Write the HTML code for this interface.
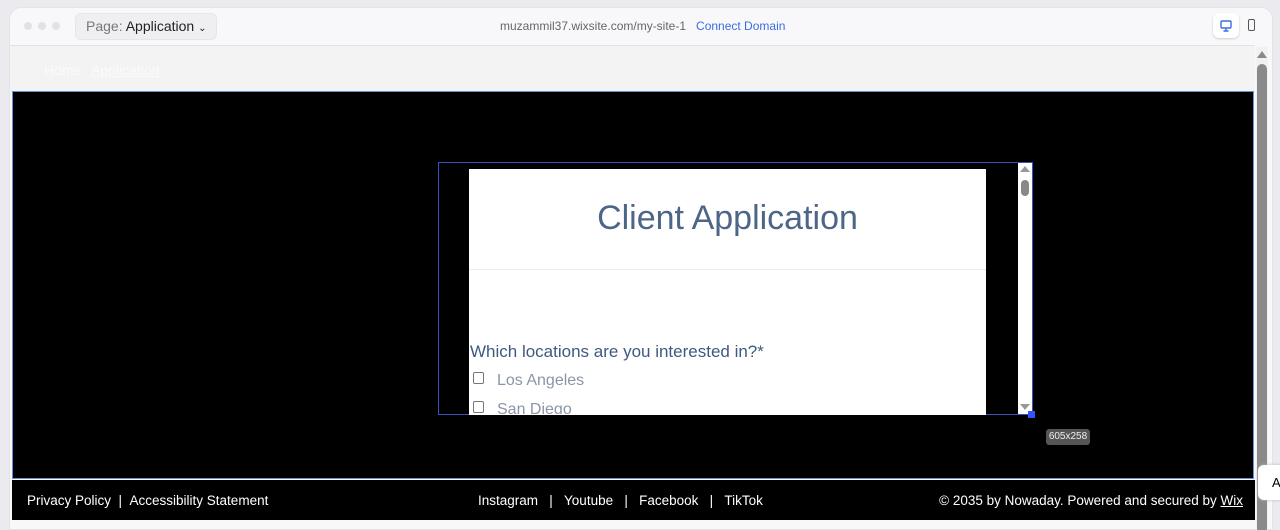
<!DOCTYPE html>
<html><head><style>
*{margin:0;padding:0;box-sizing:border-box}
html,body{width:1280px;height:530px;overflow:hidden}
body{background:#ebebef;font-family:"Liberation Sans",sans-serif;position:relative}
.a{position:absolute}
</style></head><body>
<div class="a" style="left:9px;top:7px;width:1264px;height:523px;background:#f8f8fa;border-radius:12px 12px 0 0;border:1px solid #e4e4e8"></div>
<div class="a" style="left:24px;top:22px;width:8px;height:8px;border-radius:50%;background:#e2e2e4"></div>
<div class="a" style="left:38px;top:22px;width:8px;height:8px;border-radius:50%;background:#e2e2e4"></div>
<div class="a" style="left:52px;top:22px;width:8px;height:8px;border-radius:50%;background:#e2e2e4"></div>
<div class="a" style="left:75px;top:13px;width:142px;height:27px;background:#efeff1;border-radius:6px;border:1px solid #e6e6e8"></div>
<div class="a" style="left:86px;top:18px;font-size:14px;color:#777">Page: <span style="color:#222">Application</span> <span style="color:#222;font-size:10px">⌄</span></div>
<div class="a" style="left:500px;top:19px;font-size:12px;color:#666">muzammil37.wixsite.com/my-site-1 &nbsp;&nbsp;<span style="color:#3b6de0">Connect Domain</span></div>
<div class="a" style="left:1213px;top:13px;width:26px;height:25px;background:#fff;border-radius:6px;box-shadow:0 1px 2px #ccc"></div>
<svg class="a" style="left:1219px;top:19px" width="14" height="14" viewBox="0 0 14 14"><rect x="2" y="2" width="10" height="7" rx="1" fill="none" stroke="#3b6de0" stroke-width="1.4"/><path d="M7 9v3M4.5 12h5" stroke="#3b6de0" stroke-width="1.4"/></svg>
<div class="a" style="left:1248px;top:19px;width:7px;height:12px;border:1.3px solid #555;border-radius:2px"></div>
<div class="a" style="left:10px;top:45px;width:1245px;height:47px;background:#f3f3f4;border-top:1px solid #e2e2e4"></div>
<div class="a" style="left:44px;top:62px;font-size:14px;color:#fafafa">Home</div>
<div class="a" style="left:91px;top:62px;font-size:14px;color:#fafafa;text-decoration:underline">Application</div>
<div class="a" style="left:12px;top:91px;width:1242px;height:388px;background:#000;border:1px solid #6a90d8"></div>
<div class="a" style="left:438px;top:162px;width:595px;height:253px;border:1px solid #3a4fc0"></div>
<div class="a" style="left:469px;top:169px;width:517px;height:246px;background:#fff"></div>
<div class="a" style="left:469px;top:269px;width:517px;height:1px;background:#ececec"></div>
<div class="a" style="left:469px;top:199px;width:517px;text-align:center;font-size:34px;color:#4d6688">Client Application</div>
<div class="a" style="left:470px;top:342px;font-size:17px;color:#3e5a80">Which locations are you interested in?*</div>
<div class="a" style="left:473px;top:372px;width:11px;height:12px;border:1px solid #777;border-radius:2px"></div>
<div class="a" style="left:497px;top:372px;font-size:16px;color:#8a96a6">Los Angeles</div>
<div class="a" style="left:473px;top:401px;width:11px;height:12px;border:1px solid #777;border-radius:2px"></div>
<div class="a" style="left:497px;top:401px;height:13px;overflow:hidden;font-size:16px;color:#8a96a6">San Diego</div>
<div class="a" style="left:1018px;top:163px;width:14px;height:251px;background:#fff"></div>
<div class="a" style="left:1021px;top:180px;width:8px;height:16px;background:#888;border-radius:4px"></div>
<div class="a" style="left:1020px;top:166px;width:0;height:0;border:5px solid transparent;border-bottom:6px solid #999;border-top:0"></div>
<div class="a" style="left:1020px;top:404px;width:0;height:0;border:5px solid transparent;border-top:6px solid #999;border-bottom:0"></div>
<div class="a" style="left:1028px;top:411px;width:7px;height:7px;background:#3355ff"></div>
<div class="a" style="left:1046px;top:429px;width:44px;height:16px;background:#555;border-radius:3px;color:#eee;font-size:10px;text-align:center;line-height:16px">605x258</div>
<div class="a" style="left:12px;top:480px;width:1243px;height:40px;background:#000"></div>
<div class="a" style="left:27px;top:493px;font-size:13.5px;color:#fff">Privacy Policy &nbsp;| &nbsp;Accessibility Statement</div>
<div class="a" style="left:478px;top:493px;font-size:13.5px;color:#fff">Instagram &nbsp;&nbsp;| &nbsp;&nbsp;Youtube &nbsp;&nbsp;| &nbsp;&nbsp;Facebook &nbsp;&nbsp;| &nbsp;&nbsp;TikTok</div>
<div class="a" style="right:37px;top:493px;font-size:13.5px;color:#fff">© 2035 by Nowaday. Powered and secured by <u>Wix</u></div>
<div class="a" style="left:1256px;top:47px;width:12px;height:483px;background:#f1f1f1"></div>
<div class="a" style="left:1257px;top:51px;width:0;height:0;border:5px solid transparent;border-bottom:7px solid #888;border-top:0"></div>
<div class="a" style="left:1257px;top:64px;width:10px;height:470px;background:#8a8a8a;border-radius:5px"></div>
<div class="a" style="left:1258px;top:465px;width:30px;height:35px;background:#fff;border-radius:6px;box-shadow:0 0 3px #bbb;font-size:13px;padding:10px 0 0 14px">A</div>
</body></html>
